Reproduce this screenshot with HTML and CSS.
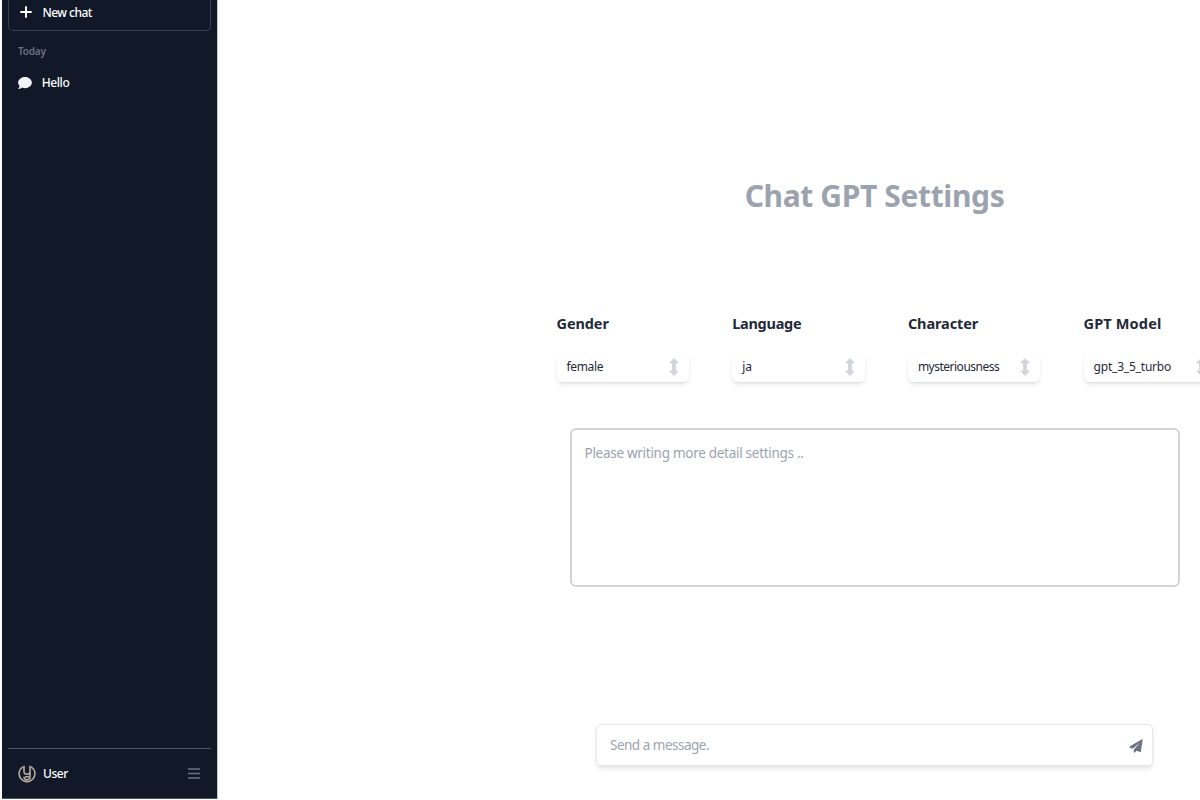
FILE: index.html
```html
<!DOCTYPE html>
<html lang="en">
<head>
<meta charset="utf-8">
<title>Chat GPT Settings</title>
<link rel="stylesheet" href="styles.css">
</head>
<body>
<div class="app">
  <aside class="sidebar">
    <button class="new-chat">
      <svg class="plus" viewBox="0 0 12 12"><path d="M6 1v10M1 6h10" fill="none" stroke="#fff" stroke-width="1.900" stroke-linecap="round"/></svg>
      <span class="t-new">New chat</span>
    </button>
    <div class="day"><span class="t-today">Today</span></div>
    <div class="chat">
      <svg class="bubble" viewBox="0 0 512 448"><path fill="#f3f4f6" d="M256 0C114.600 0 0 93.100 0 208c0 49.600 21.400 95 57 130.700C44.500 389.100 2.700 434 2.200 434.500c-2.200 2.300-2.800 5.700-1.500 8.700S4.800 448 8 448c66.300 0 116-31.800 140.600-51.400 32.700 12.300 69 19.400 107.400 19.400 141.400 0 256-93.100 256-208S397.400 0 256 0z"/></svg>
      <span class="t-hello">Hello</span>
    </div>
    <footer class="account">
      <svg class="avatar" viewBox="0 0 18 18" fill="none" stroke="#b5aaa0"><path d="M5 1.900A7.900 7.900 0 1 0 13 1.900" stroke-width="1.600"/><path d="M6 .8V6.500a3 2.800 0 0 0 6 0V.8M12 6.500v5.300a3 3 0 0 1-6 0M7 11.800h4" stroke-width="1.600"/></svg>
      <span class="t-user">User</span>
      <svg class="menu" viewBox="0 0 12 11"><path d="M0 1h12M0 5.500h12M0 10h12" stroke="#6b7280" stroke-width="1.400"/></svg>
    </footer>
  </aside>
  <main class="main">
    <div class="content">
      <h1 class="title">Chat GPT Settings</h1>
      <section class="options">
        <div class="option"><h2 class="label">Gender</h2><div class="select"><span class="v-female">female</span><svg class="arrows" viewBox="0 0 10 18"><path d="M5 1 8.900 4.900H6.300v8.200h2.600L5 17 1.100 13.100h2.600V4.900H1.100z"/></svg></div></div>
        <div class="option"><h2 class="label l-language">Language</h2><div class="select"><span class="v-ja">ja</span><svg class="arrows" viewBox="0 0 10 18"><path d="M5 1 8.900 4.900H6.300v8.200h2.600L5 17 1.100 13.100h2.600V4.900H1.100z"/></svg></div></div>
        <div class="option"><h2 class="label">Character</h2><div class="select"><span class="v-myst">mysteriousness</span><svg class="arrows" viewBox="0 0 10 18"><path d="M5 1 8.900 4.900H6.300v8.200h2.600L5 17 1.100 13.100h2.600V4.900H1.100z"/></svg></div></div>
        <div class="option"><h2 class="label l-model">GPT Model</h2><div class="select"><span class="v-gpt">gpt_3_5_turbo</span><svg class="arrows" viewBox="0 0 10 18"><path d="M5 1 8.900 4.900H6.300v8.200h2.600L5 17 1.100 13.100h2.600V4.900H1.100z"/></svg></div></div>
      </section>
      <div class="details"><span class="t-details">Please writing more detail settings ..</span></div>
      <div class="composer">
        <span class="t-send">Send a message.</span>
        <svg class="plane" viewBox="0 0 14 14"><path fill="#6b7280" d="M13.700.5 11.900 12.600q-.1.700-.8.500L7.600 11.700 5.700 13.500q-.8.500-.9-.3V10.600L11.200 3.400 3.500 9.800.7 8.600q-.9-.5 0-1.100L12.900.3q.8-.4.800.2z"/></svg>
      </div>
    </div>
  </main>
</div>
</body>
</html>
```
FILE: styles.css
```css
* { box-sizing: border-box; }
body { margin: 0; background: #fff; font-family: "Noto Sans", "Open Sans", sans-serif; }
.app { display: flex; width: 1200px; height: 800px; overflow: hidden; padding-left: 2px; }
svg { display: block; flex: none; }
span { white-space: nowrap; }
.sidebar { width: 215px; height: 799px; flex: none; padding: 0 6px; background: #111827; border-bottom: 1px solid #4b5563; box-shadow: 1px 0 #c4c7cc; display: flex; flex-direction: column; color: #fff; font-size: 12px; font-weight: 500; }
.new-chat { width: 203px; height: 31px; border: 1px solid #374151; border-top: 0; border-radius: 0 0 5px 5px; background: none; color: #fff; font: inherit; display: flex; align-items: center; gap: 10.500px; padding: 0 0 6px 11px; }
.t-new { letter-spacing: -.55px; }
.plus { width: 12px; height: 12px; }
.day { height: 40px; padding-left: 10px; display: flex; align-items: center; color: #6b7280; font-size: 10px; font-weight: 600; }
.t-today { letter-spacing: -.2px; }
.chat { height: 23px; padding-left: 10px; display: flex; align-items: center; gap: 9.700px; }
.t-hello { letter-spacing: -.4px; }
.bubble { width: 14px; height: 12px; }
.account { margin-top: auto; height: 50px; border-top: 1px solid #4b5563; display: flex; align-items: center; padding: 0 11px 0 10px; }
.t-user { letter-spacing: -.45px; }
.avatar { width: 18px; height: 18px; margin-right: 7px; }
.menu { width: 12px; height: 11px; margin-left: auto; }
.main { flex: 1; min-width: 0; overflow: hidden; padding-left: 339px; }
.content { width: 660px; height: 800px; display: flex; flex-direction: column; }
.title { margin: 174px 0 0; width: 637px; height: 44px; line-height: 44px; text-align: center; color: #9ca3af; font-size: 30px; font-weight: 700; letter-spacing: -.37px; white-space: nowrap; }
.options { margin: 93px 0 0 .5px; display: grid; grid-template-columns: repeat(4, 132.500px); column-gap: 43.200px; }
.label { margin: 0; height: 24px; line-height: 24px; color: #1f2937; font-size: 14.500px; font-weight: 700; letter-spacing: -.1px; white-space: nowrap; }
.l-language { letter-spacing: -.27px; }
.l-model { letter-spacing: .15px; }
.select { margin-top: 17px; height: 30px; border-radius: 6px; background: #fff; box-shadow: 0 3px 5px -1px rgba(0,0,0,.12), 0 1px 3px -1px rgba(0,0,0,.08); display: flex; align-items: center; justify-content: space-between; padding: 0 10px; color: #1f2937; font-size: 12px; }
.select span { padding-bottom: 2px; }
.v-female { letter-spacing: -.35px; }
.v-myst { letter-spacing: -.5px; }
.v-gpt { letter-spacing: -.2px; }
.arrows { width: 10px; height: 18px; fill: #d1d5db; stroke: #d1d5db; stroke-width: 1.200; stroke-linejoin: round; }
.details { margin: 46px 0 0 14px; width: 610px; height: 159px; border: 2px solid #d1d5db; border-radius: 6px; padding: 13px 12.500px; color: #9ca3af; font-size: 13.500px; line-height: 20px; }
.t-details { letter-spacing: -.28px; }
.composer { margin: 137px 0 0 40px; width: 557px; height: 42px; border: 1px solid #e5e7eb; border-radius: 5px; box-shadow: 0 3px 5px -1px rgba(0,0,0,.13); display: flex; align-items: center; justify-content: space-between; padding: 0 9.500px 0 13px; color: #9ca3af; font-size: 13.500px; }
.t-send { padding-bottom: 1px; letter-spacing: -.5px; }
.plane { width: 14px; height: 14px; margin-top: 2px; }
```
